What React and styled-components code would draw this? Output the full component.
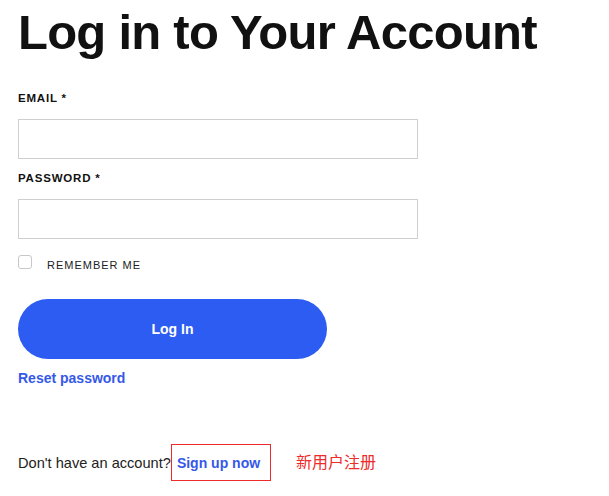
import React from 'react'
import styled, { createGlobalStyle } from 'styled-components'

const GlobalStyle = createGlobalStyle`
  body {
    margin: 0;
    background: #fff;
    font-family: 'Liberation Sans', Arial, sans-serif;
    color: #111;
  }
`

const Page = styled.div`
  padding: 0 18px;
`

const Title = styled.h1`
  margin: 0;
  padding-top: 4px;
  font-size: 49px;
  line-height: 56px;
  font-weight: 700;
  letter-spacing: -0.75px;
  color: #111;
`

const Form = styled.form`
  display: flex;
  flex-direction: column;
  margin-top: 31px;
`

const Label = styled.label`
  display: block;
  font-size: 11.5px;
  font-weight: 700;
  letter-spacing: 0.8px;
  text-transform: uppercase;
  line-height: 14px;
  margin-bottom: 14px;
  color: #111;
`

const Input = styled.input`
  box-sizing: border-box;
  width: 400px;
  height: 40px;
  border: 1px solid #cfcfcf;
  border-radius: 0;
  padding: 0 10px;
  margin-bottom: 12px;
  font: inherit;
  outline: none;
`

const CheckRow = styled.div`
  display: flex;
  align-items: center;
  gap: 15px;
  margin-top: 8px;
`

const Box = styled.span`
  box-sizing: border-box;
  width: 14px;
  height: 14px;
  border: 1px solid #c8c8c8;
  border-radius: 3px;
  margin-top: -6px;
`

const CheckText = styled.span`
  font-size: 11px;
  letter-spacing: 1px;
  color: #222;
`

const Button = styled.button`
  margin-top: 28px;
  width: 309px;
  height: 60px;
  border: none;
  border-radius: 30px;
  background: #2d5cf2;
  color: #fff;
  font-family: inherit;
  font-size: 14px;
  font-weight: 700;
`

const Link = styled.a`
  color: #3558e8;
  font-weight: 700;
  font-size: 14px;
  text-decoration: none;
`

const ResetRow = styled.div`
  margin-top: 10px;
  line-height: 18px;
`

const Footer = styled.div`
  display: flex;
  align-items: center;
  margin-top: 57px;
  font-size: 14.6px;
  color: #222;
`

const SignUpBox = styled.span`
  display: inline-flex;
  align-items: center;
  box-sizing: border-box;
  height: 37px;
  padding: 0 10px 0 5px;
  border: 1px solid #ee2a2a;
`

const Note = styled.span`
  margin-left: 25px;
  color: #ee2a2a;
  font-size: 16px;
  font-family: 'Noto Sans CJK SC', sans-serif;
  margin-top: -4px;
`

export default function App() {
  return (
    <Page>
      <GlobalStyle />
      <Title>Log in to Your Account</Title>
      <Form onSubmit={(e) => e.preventDefault()}>
        <Label>Email *</Label>
        <Input type="email" />
        <Label>Password *</Label>
        <Input type="password" />
        <CheckRow>
          <Box />
          <CheckText>REMEMBER ME</CheckText>
        </CheckRow>
        <Button type="submit">Log In</Button>
        <ResetRow>
          <Link href="#">Reset password</Link>
        </ResetRow>
      </Form>
      <Footer>
        <span>Don't have an account?</span>
        <SignUpBox>
          <Link href="#">Sign up now</Link>
        </SignUpBox>
        <Note>新用户注册</Note>
      </Footer>
    </Page>
  )
}
